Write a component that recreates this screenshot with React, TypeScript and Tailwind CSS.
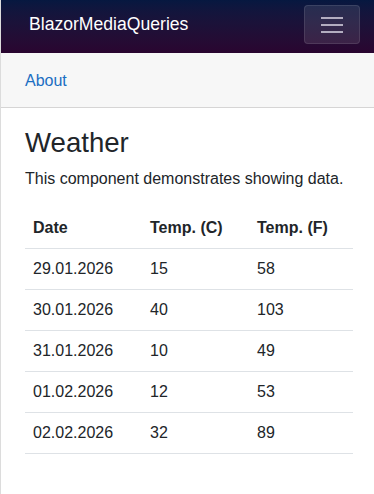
const forecasts = [
  { date: "29.01.2026", c: 15, f: 58 },
  { date: "30.01.2026", c: 40, f: 103 },
  { date: "31.01.2026", c: 10, f: 49 },
  { date: "01.02.2026", c: 12, f: 53 },
  { date: "02.02.2026", c: 32, f: 89 },
];

export default function App() {
  return (
    <div className="min-h-[494px] bg-white border-l border-[#dcdcdc] font-['Liberation_Sans',Arial,sans-serif] text-[#212529]">
      <nav className="h-[53px] bg-gradient-to-b from-[#061840] to-[#2a0530] flex items-start justify-between pt-[5px] pl-[28px] pr-[14px]">
        <div className="h-[39px] flex items-center text-white text-[17.6px]">BlazorMediaQueries</div>
        <button className="w-[56px] h-[39px] rounded-[4px] border border-white/10 bg-white/10 flex items-center justify-center">
          <svg width="24" height="18" viewBox="0 0 24 18">
            <path d="M1 2h22M1 9h22M1 16h22" stroke="#b3adc0" strokeWidth="2" />
          </svg>
        </button>
      </nav>
      <div className="h-[55px] bg-[#f7f7f7] border-b border-[#d6d5d5] flex items-center pl-[24px] pt-[2px]">
        <a href="#" className="text-[#1b6ec2] text-base">About</a>
      </div>
      <main className="pl-[24px] pr-[21px] pt-[18px]">
        <h1 className="text-[27.6px] leading-[1.2] mb-2 font-normal">Weather</h1>
        <p className="text-base leading-6 mb-[17px]">This component demonstrates showing data.</p>
        <table className="w-full text-base border-collapse">
          <thead>
            <tr className="border-b border-[#dee2e6] text-left">
              <th className="w-[117px] p-2 leading-6 font-bold">Date</th>
              <th className="w-[107px] p-2 leading-6 font-bold">Temp. (C)</th>
              <th className="p-2 leading-6 font-bold">Temp. (F)</th>
            </tr>
          </thead>
          <tbody>
            {forecasts.map((f) => (
              <tr key={f.date} className="border-b border-[#dee2e6]">
                <td className="p-2 leading-6">{f.date}</td>
                <td className="p-2 leading-6">{f.c}</td>
                <td className="p-2 leading-6">{f.f}</td>
              </tr>
            ))}
          </tbody>
        </table>
      </main>
    </div>
  );
}
